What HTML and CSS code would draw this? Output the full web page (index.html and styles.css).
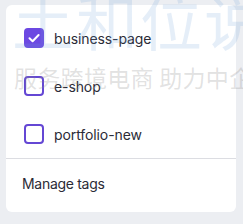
FILE: index.html
```html
<!DOCTYPE html>
<html lang="en">
<head>
<meta charset="utf-8">
<link rel="stylesheet" href="styles.css">
</head>
<body>
<div class="menu">
  <ul class="tag-list">
    <li class="tag-item">
      <span class="box checked">
        <svg viewBox="0 0 20 20" width="20" height="20"><path d="M5.5 10.3 L8.6 13.2 L14.6 7" fill="none" stroke="#fff" stroke-width="2" stroke-linecap="round" stroke-linejoin="round"/></svg>
      </span>
      <span class="label">business-page</span>
    </li>
    <li class="tag-item">
      <span class="box"></span>
      <span class="label">e-shop</span>
    </li>
    <li class="tag-item">
      <span class="box"></span>
      <span class="label">portfolio-new</span>
    </li>
  </ul>
  <div class="manage">Manage tags</div>
</div>
<div class="wm wm-big">土和位说</div>
<div class="wm wm-small">服务跨境电商 助力中企</div>
</body>
</html>
```
FILE: styles.css
```css
html, body {
  margin: 0;
  padding: 0;
}
body {
  width: 243px;
  height: 224px;
  overflow: hidden;
  background: #eceef2;
  font-family: Inter, "Noto Sans", sans-serif;
  position: relative;
}
.menu {
  margin: 5px 0 0 6px;
  width: 230px;
  height: 207px;
  box-sizing: border-box;
  background: #fff;
  border-radius: 6px;
  padding-top: 9px;
  display: flex;
  flex-direction: column;
}
.tag-list {
  list-style: none;
  margin: 0;
  padding: 0;
  border-bottom: 1px solid #dcdde2;
}
.tag-item {
  height: 48px;
  display: flex;
  align-items: center;
  padding-left: 18px;
  gap: 10px;
}
.box {
  width: 20px;
  height: 20px;
  box-sizing: border-box;
  border: 2px solid #6447d4;
  border-radius: 4px;
  display: flex;
}
.box.checked {
  background: #6c48e2;
  border-color: #6c48e2;
}
.box svg {
  margin: -2px;
}
.label {
  font-size: 14px;
  color: #2b2b36;
  letter-spacing: -0.1px;
}
.manage {
  height: 48px;
  display: flex;
  align-items: center;
  padding-left: 16px;
  font-size: 14px;
  color: #2b2b36;
  letter-spacing: -0.3px;
}
.wm {
  position: absolute;
  pointer-events: none;
  font-family: "Noto Sans CJK SC", sans-serif;
  white-space: nowrap;
}
.wm-big {
  left: 12px;
  top: -26px;
  font-size: 62px;
  font-weight: 400;
  color: rgba(110, 160, 215, 0.18);
  letter-spacing: 2px;
}
.wm-small {
  left: 14px;
  top: 60px;
  font-size: 23px;
  color: rgba(140, 140, 140, 0.26);
  letter-spacing: 0.3px;
}
```
